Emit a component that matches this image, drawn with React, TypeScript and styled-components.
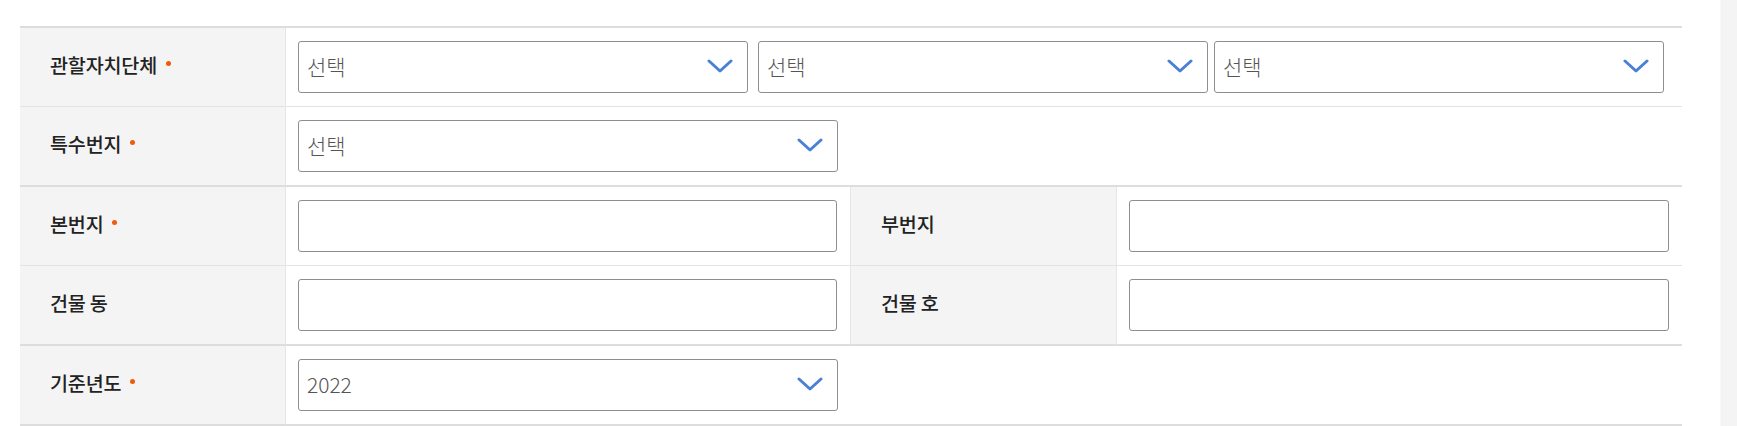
import React from 'react';
import styled, { createGlobalStyle } from 'styled-components';

type Border = 1 | 2;

interface Row {
  label: string;
  required?: boolean;
  border: Border;
  kind: 'selects' | 'select' | 'pair';
  value?: string;
  width?: number;
  second?: string;
}

const rows: Row[] = [
  { label: '관할자치단체', required: true, border: 1, kind: 'selects' },
  { label: '특수번지', required: true, border: 2, kind: 'select', width: 540 },
  { label: '본번지', required: true, border: 1, kind: 'pair', second: '부번지' },
  { label: '건물 동', border: 2, kind: 'pair', second: '건물 호' },
  { label: '기준년도', required: true, border: 2, kind: 'select', width: 540, value: '2022' },
];

const Chevron: React.FC = () => (
  <svg width="26" height="14" viewBox="0 0 26 14" fill="none">
    <polyline
      points="2,2 13,12 24,2"
      stroke="#4a80d6"
      strokeWidth="3"
      strokeLinecap="round"
      strokeLinejoin="round"
    />
  </svg>
);

const Select: React.FC<{ value?: string; width: number; gapRight?: number }> = ({
  value,
  width,
  gapRight = 0,
}) => (
  <SelectBox $width={width} $gapRight={gapRight}>
    <SelectText>{value || '선택'}</SelectText>
    <Chevron />
  </SelectBox>
);

const Label: React.FC<{ text: string; required?: boolean; border: Border }> = ({
  text,
  required,
  border,
}) => (
  <LabelCell $border={border}>
    <LabelText>{text}</LabelText>
    {required && <RequiredDot />}
  </LabelCell>
);

const App: React.FC = () => {
  return (
    <>
      <GlobalStyle />
      <Page>
        <Main>
          <Table>
            {rows.map((row) => {
              if (row.kind === 'pair') {
                return (
                  <React.Fragment key={row.label}>
                    <Label text={row.label} required={row.required} border={row.border} />
                    <ValueCell $border={row.border} $span={1} $divider>
                      <TextInput />
                    </ValueCell>
                    <Label text={row.second || ''} border={row.border} />
                    <ValueCell $border={row.border} $span={1}>
                      <TextInput />
                    </ValueCell>
                  </React.Fragment>
                );
              }
              return (
                <React.Fragment key={row.label}>
                  <Label text={row.label} required={row.required} border={row.border} />
                  <ValueCell $border={row.border} $span={3}>
                    {row.kind === 'selects' ? (
                      <>
                        <Select width={450} gapRight={10} />
                        <Select width={450} gapRight={6} />
                        <Select width={450} />
                      </>
                    ) : (
                      <Select width={row.width || 540} value={row.value} />
                    )}
                  </ValueCell>
                </React.Fragment>
              );
            })}
          </Table>
        </Main>
        <ScrollTrack />
      </Page>
    </>
  );
};

const GlobalStyle = createGlobalStyle`
  * {
    box-sizing: border-box;
  }
  html, body {
    margin: 0;
    padding: 0;
    background: #fff;
    font-family: "Noto Sans CJK KR", "Noto Sans", sans-serif;
  }
`;

const Page = styled.div`
  display: flex;
  height: 426px;
  overflow: hidden;
`;

const Main = styled.div`
  flex: 1;
  padding: 26px 38px 0 20px;
`;

const ScrollTrack = styled.div`
  width: 17px;
  flex-shrink: 0;
  background: #f4f4f4;
  border-left: 1px solid #f8f8f8;
`;

const Table = styled.div`
  display: grid;
  grid-template-columns: 16% 34% 16% 34%;
  border-top: 2px solid #dddddd;
`;

const LabelCell = styled.div<{ $border: Border }>`
  display: flex;
  align-items: center;
  height: ${(p) => 78 + p.$border}px;
  padding: 0 0 5px 30px;
  background: #f4f4f4;
  border-right: 1px solid #e6e6e6;
  border-bottom: ${(p) => p.$border}px solid ${(p) => (p.$border === 2 ? '#dddddd' : '#e3e3e3')};
`;

const LabelText = styled.span`
  font-size: 19.6px;
  font-weight: 500;
  color: #222;
  letter-spacing: -0.2px;
`;

const RequiredDot = styled.span`
  width: 5px;
  height: 5px;
  border-radius: 50%;
  background: #f05a0a;
  margin-left: 9px;
  margin-bottom: 3px;
`;

const ValueCell = styled.div<{ $border: Border; $span: number; $divider?: boolean }>`
  grid-column: span ${(p) => p.$span};
  display: flex;
  align-items: center;
  height: ${(p) => 78 + p.$border}px;
  padding: 0 13px 0 12px;
  border-bottom: ${(p) => p.$border}px solid ${(p) => (p.$border === 2 ? '#dddddd' : '#e3e3e3')};
  border-right: ${(p) => (p.$divider ? '1px solid #e6e6e6' : 'none')};
`;

const SelectBox = styled.div<{ $width: number; $gapRight: number }>`
  display: flex;
  align-items: center;
  justify-content: space-between;
  flex: 0 0 ${(p) => p.$width}px;
  width: ${(p) => p.$width}px;
  height: 52px;
  margin-right: ${(p) => p.$gapRight}px;
  padding: 0 14px 2px 8px;
  background: #fff;
  border: 1px solid #8e8e8e;
  border-radius: 3px;
`;

const SelectText = styled.span`
  font-size: 21px;
  font-weight: 300;
  color: #555;
`;

const TextInput = styled.input`
  width: 100%;
  height: 52px;
  padding: 0 8px;
  background: #fff;
  border: 1px solid #8e8e8e;
  border-radius: 3px;
  font-family: inherit;
  font-size: 18px;
  color: #333;
  outline: none;
`;

export default App;
